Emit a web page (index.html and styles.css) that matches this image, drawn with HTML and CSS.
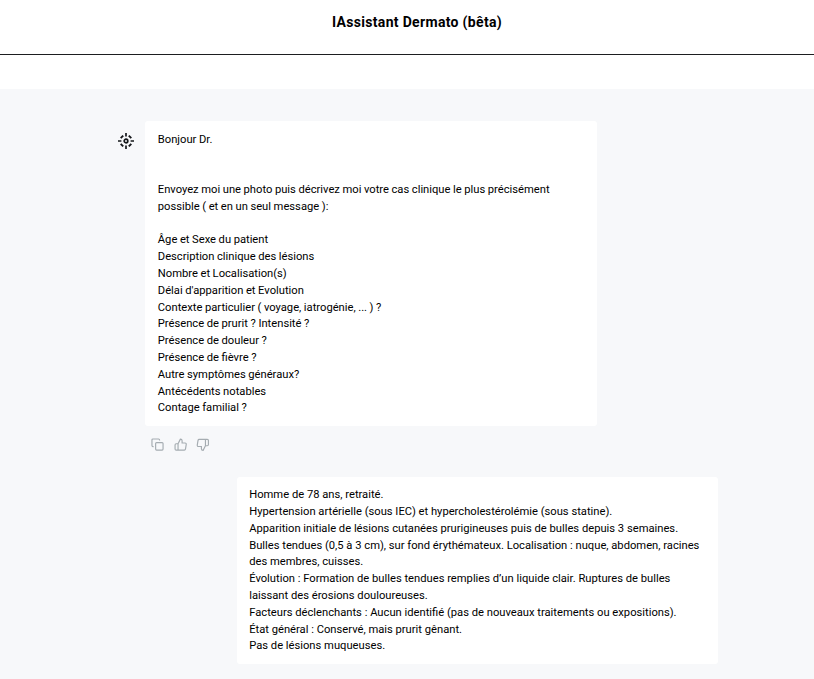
FILE: index.html
```html
<!DOCTYPE html>
<html lang="fr">
<head>
<meta charset="utf-8">
<title>IAssistant Dermato (bêta)</title>
<link rel="stylesheet" href="styles.css">
</head>
<body>
<header class="header"><h1 class="title">IAssistant Dermato (bêta)</h1></header>
<main class="chat">
  <section class="row">
    <svg class="avatar" viewBox="0 0 16 16" fill="none" stroke="#15171a" stroke-width="1.7">
      <circle cx="8" cy="8" r="1.8"/>
      <path d="M8 0v3.4M8 12.6V16M0 8h3.4M12.6 8H16"/>
      <path d="M2.7 5.2 5.2 2.7M10.8 2.7l2.5 2.5M2.7 10.8l2.5 2.5M13.3 10.8l-2.5 2.5" stroke-width="1.9"/>
    </svg>
    <div>
      <div class="bubble bot">Bonjour Dr.


Envoyez moi une photo puis décrivez moi votre cas clinique le plus précisément
possible ( et en un seul message ):

Âge et Sexe du patient
Description clinique des lésions
Nombre et Localisation(s)
Délai d'apparition et Evolution
Contexte particulier ( voyage, iatrogénie, ... ) ?
Présence de prurit ? Intensité ?
Présence de douleur ?
Présence de fièvre ?
Autre symptômes généraux?
Antécédents notables
Contage familial ?</div>
      <div class="actions">
        <svg class="icon" viewBox="0 0 14 14"><rect x="4.8" y="4.8" width="7.7" height="7.7" rx="1"/><path d="M2.7 8.9H2a1 1 0 0 1-1-1V2a1 1 0 0 1 1-1h5.9a1 1 0 0 1 1 1v.7"/></svg>
        <svg class="icon" viewBox="0 0 14 14"><path d="M4.2 6 6.6 1.2c1.2 0 1.8.7 1.8 1.7v2.3h3.1a1.2 1.2 0 0 1 1.2 1.4l-.8 4.9a1.2 1.2 0 0 1-1.2 1H4.2zM4.2 12.5H2.3a1.2 1.2 0 0 1-1.2-1.2V7.2A1.2 1.2 0 0 1 2.3 6h1.9"/></svg>
        <svg class="icon" viewBox="0 0 14 14"><path d="M9.8 8 7.4 12.8c-1.2 0-1.8-.7-1.8-1.7V8.8H2.5a1.2 1.2 0 0 1-1.2-1.4l.8-4.9a1.2 1.2 0 0 1 1.2-1h6.5zM9.8 1.5h1.9a1.2 1.2 0 0 1 1.2 1.2v4.1A1.2 1.2 0 0 1 11.7 8H9.8"/></svg>
      </div>
    </div>
  </section>
  <section class="bubble user">Homme de 78 ans, retraité.
Hypertension artérielle (sous IEC) et hypercholestérolémie (sous statine).
Apparition initiale de lésions cutanées prurigineuses puis de bulles depuis 3 semaines.
Bulles tendues (0,5 à 3 cm), sur fond érythémateux. Localisation : nuque, abdomen, racines
des membres, cuisses.
Évolution : Formation de bulles tendues remplies d’un liquide clair. Ruptures de bulles
laissant des érosions douloureuses.
Facteurs déclenchants : Aucun identifié (pas de nouveaux traitements ou expositions).
État général : Conservé, mais prurit gênant.
Pas de lésions muqueuses.</section>
</main>
</body>
</html>
```
FILE: styles.css
```css
* { box-sizing: border-box; }
body { margin: 0; height: 679px; overflow: hidden; background: #fff; color: #000; font-family: Roboto, "Liberation Sans", sans-serif; }
.header { height: 55px; border-bottom: 1px solid #1d1e20; display: flex; justify-content: center; padding: 12px 0 0 20px; }
.title { margin: 0; font-size: 14px; line-height: 20px; font-weight: 700; letter-spacing: 0.32px; }
.chat { margin-top: 34px; height: 590px; background: #f7f8fa; padding: 32.4px 96px 0 117px; display: flex; flex-direction: column; }
.row { display: flex; gap: 12px; }
.avatar { width: 16px; height: 16px; margin: 11.3px -0.5px 0 0.5px; flex: none; }
.bubble { background: #fff; border-radius: 3px; padding: 10.2px 12.8px 9px; font-size: 11.2px; line-height: 16.8px; white-space: pre; }
.bot { width: 452px; word-spacing: -0.2px; }
.actions { display: flex; gap: 9px; padding: 12px 0 0 6px; }
.icon { width: 13.5px; height: 13.5px; fill: none; stroke: #a5acb1; stroke-width: 1.2; }
.user { width: 481px; align-self: flex-end; margin-top: 25px; padding: 10.6px 12.8px 8.6px 12.2px; }
```
